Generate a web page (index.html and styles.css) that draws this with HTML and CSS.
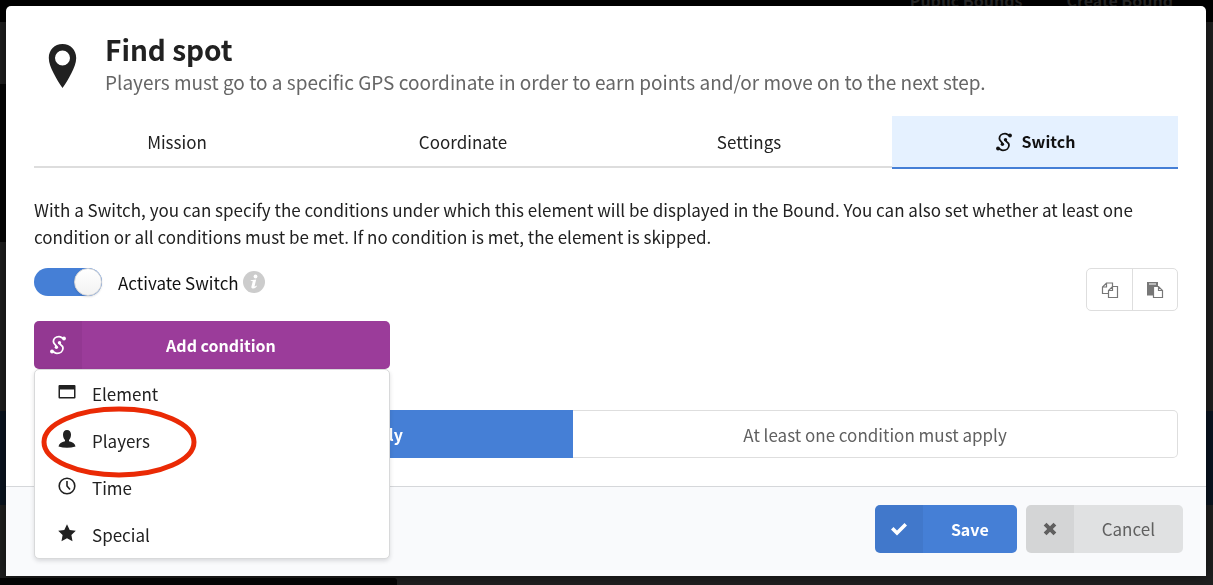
FILE: index.html
```html
<!DOCTYPE html>
<html lang="en">
<head>
  <meta charset="utf-8">
  <meta name="viewport" content="width=device-width, initial-scale=1">
  <title>Find spot</title>
  <link rel="stylesheet" href="styles.css">
</head>
<body>
  <!-- icon used by the tab and the condition button -->
  <svg class="sprite" aria-hidden="true">
    <symbol id="icon-switch" viewBox="0 0 18 20">
      <g fill="none" stroke="currentColor" stroke-width="1.8" stroke-linecap="round">
        <path d="M15 3.500C12.500 3.500 12.500 1.600 10 1.600C6.500 1.600 4.400 4 4.400 6.500C4.400 9.300 7.300 9.500 7.300 12"/>
        <path d="M3 16.500C5.500 16.500 5.500 18.400 8 18.400C11.500 18.400 14 16 14 13C14 10 10.700 10.500 10.700 8"/>
      </g>
      <g fill="currentColor">
        <circle cx="15" cy="3.500" r="1.900"/>
        <circle cx="3" cy="16.500" r="1.900"/>
        <circle cx="10.500" cy="7.800" r="1.700"/>
        <circle cx="7.400" cy="12.300" r="1.700"/>
      </g>
    </symbol>
  </svg>

  <!-- dimmed page behind the dialog -->
  <div class="backdrop" aria-hidden="true">
    <div class="backdrop-nav"><span>Public Bounds</span><span>Create Bound</span></div>
    <div class="backdrop-side"></div>
    <div class="backdrop-map"></div>
    <div class="backdrop-bar"></div>
  </div>

  <main class="modal">
    <header class="modal-header">
      <svg class="pin" viewBox="0 0 28 44" aria-hidden="true">
        <path fill="currentColor" fill-rule="evenodd" d="M14 0C6 0 .3 6 .3 14C.3 19 2.500 24 5 29C8 35 11 40 14 44C17 40 20 35 23 29C25.500 24 27.700 19 27.700 14C27.700 6 22 0 14 0ZM14 6.500A7.500 7.500 0 1 1 14 21.500A7.500 7.500 0 1 1 14 6.500Z"/>
      </svg>
      <div>
        <h1>Find spot</h1>
        <p class="subtitle">Players must go to a specific GPS coordinate in order to earn points and/or move on to the next step.</p>
      </div>
    </header>

    <div class="modal-body">
      <nav class="tabs">
        <a class="tab" href="#mission">Mission</a>
        <a class="tab" href="#coordinate">Coordinate</a>
        <a class="tab" href="#settings">Settings</a>
        <a class="tab active" href="#switch"><svg class="icon-switch"><use href="#icon-switch"/></svg>Switch</a>
      </nav>

      <p class="intro">With a Switch, you can specify the conditions under which this element will be displayed in the Bound. You can also set whether at least one condition or all conditions must be met. If no condition is met, the element is skipped.</p>

      <div class="toolbar">
        <div class="toggle">
          <input type="checkbox" id="activate" class="toggle-input" checked>
          <label for="activate">Activate Switch</label>
          <svg class="info" viewBox="0 0 22 22" aria-hidden="true">
            <circle cx="11" cy="11" r="11" fill="#ccc"/>
            <circle cx="12.500" cy="5.500" r="1.900" fill="#fff"/>
            <path fill="#fff" d="M7.800 9.200L13.200 8.600L11.600 15C11.500 15.700 12 15.700 13.400 14.600L13.900 15.200C12.500 16.900 11 17.700 9.600 17.500C8.300 17.300 8.200 16.300 8.500 15.200L9.700 10.500C9.800 10 9.500 9.900 7.700 9.900Z"/>
          </svg>
        </div>
        <div class="clipboard">
          <button type="button" aria-label="Copy">
            <svg viewBox="0 0 18 18" fill="none" stroke="currentColor" stroke-width="1.200">
              <path d="M7 12.500H1.500V6L5.500 2H11.500V5.500M5.500 2V6H1.500M11.500 5.500H16.500V16.500H7.500V9.500ZM11.500 5.500V9.500H7.500"/>
            </svg>
          </button>
          <button type="button" aria-label="Paste">
            <svg viewBox="0 0 18 18">
              <path fill="currentColor" d="M1 1H12V5H7V14.500H1Z"/>
              <path stroke="#fff" d="M3 3H10"/>
              <path fill="#fff" stroke="currentColor" stroke-width="1.200" d="M7.500 5.500H12.500L16.500 9.500V16.500H7.500ZM12.500 5.500V9.500H16.500"/>
            </svg>
          </button>
        </div>
      </div>

      <div class="dropdown">
        <button type="button" class="btn btn-purple" aria-expanded="true">
          <span class="btn-icon"><svg class="icon-switch"><use href="#icon-switch"/></svg></span>
          <span class="btn-text">Add condition</span>
        </button>
        <div class="menu">
          <button type="button" class="menu-item">
            <svg viewBox="0 0 18 18"><path fill="currentColor" fill-rule="evenodd" d="M1.500 2H16.500Q17.500 2 17.500 3V14.500Q17.500 15.500 16.500 15.500H1.500Q.5 15.500 .5 14.500V3Q.5 2 1.500 2ZM2 6.500V14H16V6.500Z"/></svg>Element
          </button>
          <button type="button" class="menu-item">
            <svg viewBox="0 0 18 18"><path fill="currentColor" d="M9 0C11.500 0 13 1.700 13 4.600C13 7 12.200 9 11 10V11.300C14.500 12 17 13.500 17.500 16.500Q9 19 .5 16.500C1 13.500 3.500 12 7 11.300V10C5.800 9 5 7 5 4.600C5 1.700 6.500 0 9 0Z"/></svg>Players
          </button>
          <button type="button" class="menu-item">
            <svg viewBox="0 0 18 18" fill="none" stroke="currentColor" stroke-width="1.600"><circle cx="9" cy="9" r="7.800"/><path d="M9 4V9L12 12.500"/></svg>Time
          </button>
          <button type="button" class="menu-item">
            <svg viewBox="0 0 18 18"><path fill="currentColor" d="M9 .3L11.700 5.900L17.800 6.700L13.400 11L14.500 17.200L9 14.200L3.500 17.200L4.600 11L.2 6.700L6.300 5.900Z"/></svg>Special
          </button>
          <svg class="marker" viewBox="0 0 158 72" aria-hidden="true"><ellipse cx="79" cy="36" rx="75" ry="33" fill="none" stroke="#ea2a05" stroke-width="5"/></svg>
        </div>
      </div>

      <div class="segments">
        <button type="button" class="segment selected">All conditions must apply</button>
        <button type="button" class="segment">At least one condition must apply</button>
      </div>
    </div>

    <footer class="modal-footer">
      <button type="button" class="btn btn-blue">
        <span class="btn-icon"><svg class="icon-small" viewBox="0 0 18 16"><path fill="currentColor" d="M1 8.600L3.500 6.100L7 9.500L14.500 2L17 4.500L7 14.500Z"/></svg></span>
        <span class="btn-text">Save</span>
      </button>
      <button type="button" class="btn btn-grey">
        <span class="btn-icon"><svg class="icon-small" viewBox="0 0 18 16"><path fill="currentColor" d="M5.500 1.700L9 5.200L12.500 1.700L15.300 4.500L11.800 8L15.300 11.500L12.500 14.300L9 10.800L5.500 14.300L2.700 11.500L6.200 8L2.700 4.500Z"/></svg></span>
        <span class="btn-text">Cancel</span>
      </button>
    </footer>
  </main>
</body>
</html>
```

FILE: styles.css
```css
* {
  box-sizing: border-box;
}

body {
  margin: 0;
  padding: 6px 7px 9px 6px;
  min-height: 100vh;
  background: #1f1f1f;
  color: #212121;
  font-family: "Noto Sans CJK SC", "Open Sans", sans-serif;
  font-size: 17px;
  line-height: 27px;
}

h1, p {
  margin: 0;
}

button {
  font: inherit;
  color: inherit;
  border: 0;
  padding: 0;
  background: none;
  cursor: pointer;
}

.sprite {
  position: absolute;
  width: 0;
  height: 0;
}

/* page behind */
.backdrop {
  position: fixed;
  inset: 0;
  overflow: hidden;
}

.backdrop-nav {
  display: flex;
  justify-content: flex-end;
  gap: 44px;
  height: 22px;
  padding-right: 40px;
  background: #000;
  color: #2b2b2b;
  font-size: 16px;
  font-weight: 700;
  line-height: 0;
}

.backdrop-side {
  position: absolute;
  left: 0;
  top: 84px;
  width: 50%;
  height: 158px;
  background: #050505;
}

.backdrop-map {
  position: absolute;
  left: 0;
  right: 0;
  top: 411px;
  height: 94px;
  background: #0a1420;
}

.backdrop-bar {
  position: absolute;
  left: 0;
  bottom: 0;
  width: 397px;
  height: 7px;
  border-radius: 0 3px 0 0;
  background: #050505;
}

/* dialog */
.modal {
  position: relative;
  background: #fff;
  border-radius: 5px 5px 0 0;
  box-shadow: 0 0 12px rgba(0, 0, 0, 0.5);
}

.modal-header {
  display: flex;
  gap: 28px;
  padding: 26px 28px 18px 42px;
}

.pin {
  flex: none;
  width: 29px;
  height: 44px;
  margin-top: 12px;
}

h1 {
  font-size: 28px;
  font-weight: 700;
  line-height: 34px;
}

.subtitle {
  color: #666;
  font-size: 19px;
  line-height: 32px;
}

.modal-body {
  padding: 0 28px 28px;
}

.tabs {
  display: grid;
  grid-template-columns: repeat(4, 1fr);
  border-bottom: 2px solid #ddd;
}

.tab {
  display: flex;
  justify-content: center;
  align-items: center;
  height: 50px;
  color: inherit;
  text-decoration: none;
}

.tab.active {
  gap: 9px;
  height: 53px;
  margin-bottom: -3px;
  border-bottom: 2px solid #457fd6;
  background: #e5f1ff;
  color: #111;
  font-size: 16px;
  font-weight: 700;
}

.icon-switch {
  width: 18px;
  height: 20px;
}

.intro {
  margin-top: 28px;
}

.toolbar {
  display: flex;
  justify-content: space-between;
  align-items: flex-start;
  margin-top: 18px;
}

.toggle {
  display: flex;
  align-items: center;
  height: 28px;
  color: #111;
}

.toggle-input {
  appearance: none;
  width: 68px;
  height: 28px;
  margin: 0 16px 0 0;
  border-radius: 14px;
  background: #457fd6;
}

.toggle-input::before {
  content: "";
  display: block;
  box-sizing: border-box;
  width: 28px;
  height: 28px;
  margin-left: 40px;
  border: 1px solid #d5d5d6;
  border-radius: 50%;
  background: linear-gradient(#fff, #f2f2f2);
  box-shadow: 0 1px 2px rgba(34, 36, 38, 0.15);
}

.info {
  width: 22px;
  height: 22px;
  margin-left: 4px;
}

.clipboard {
  display: flex;
  border: 1px solid #dedede;
  border-radius: 5px;
}

.clipboard button {
  display: grid;
  place-items: center;
  width: 45px;
  height: 41px;
  color: #777;
}

.clipboard button + button {
  border-left: 1px solid #dedede;
}

.clipboard svg {
  width: 18px;
  height: 18px;
}

.btn {
  display: flex;
  height: 48px;
  border-radius: 5px;
  overflow: hidden;
  line-height: 48px;
}

.btn-icon {
  display: grid;
  place-items: center;
  width: 48px;
  height: 48px;
  background: rgba(0, 0, 0, 0.05);
}

.btn-text {
  flex: 1;
  padding: 0 28px;
}

.icon-small {
  width: 18px;
  height: 16px;
}

.btn-purple {
  width: 100%;
  padding-right: 30px;
  background: #9b3c9a;
  color: #fff;
  font-size: 16px;
  font-weight: 700;
}

.btn-blue {
  background: #457fd6;
  color: #fff;
  font-size: 16px;
  font-weight: 700;
}

.btn-grey {
  background: #e0e1e2;
  color: #606060;
}

/* drop-down */
.dropdown {
  position: relative;
  width: 356px;
  margin-top: 10px;
}

.menu {
  position: absolute;
  z-index: 2;
  top: 100%;
  left: 0;
  right: 0;
  border: 1px solid #d8d9da;
  border-radius: 5px;
  background: #fff;
  box-shadow: 0 2px 4px rgba(34, 36, 38, 0.15);
}

.menu-item {
  display: flex;
  align-items: center;
  gap: 16px;
  width: 100%;
  height: 47px;
  padding: 0 23px;
}

.menu-item svg {
  width: 18px;
  height: 18px;
  margin-bottom: 3px;
}

.marker {
  position: absolute;
  left: 5px;
  top: 36px;
  width: 158px;
  height: 72px;
  pointer-events: none;
}

.segments {
  display: flex;
  margin-top: 41px;
}

.segment {
  flex: 1 1 auto;
  height: 48px;
  border: 1px solid #dedede;
  border-left: 0;
  border-radius: 0 5px 5px 0;
  color: #606060;
}

.segment.selected {
  border: 0;
  border-radius: 5px 0 0 5px;
  background: #457fd6;
  color: #fff;
  font-size: 16px;
  font-weight: 700;
}

.modal-footer {
  display: flex;
  justify-content: flex-end;
  gap: 9px;
  padding: 18px 23px 23px;
  border-top: 1px solid #d5d7da;
  background: #f9fafc;
}
```
